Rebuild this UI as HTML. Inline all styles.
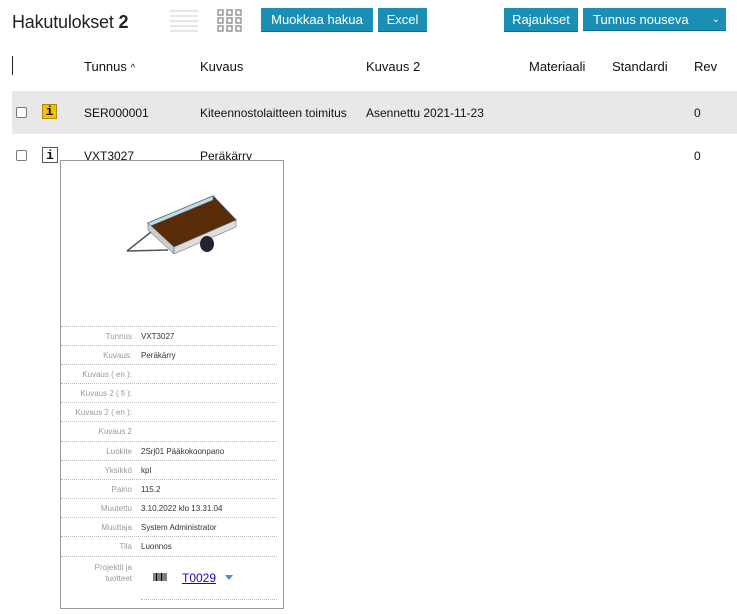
<!DOCTYPE html>
<html><head><meta charset="utf-8"><style>
body{margin:0;width:737px;height:614px;background:#fff;font-family:"Liberation Sans",sans-serif;position:relative;overflow:hidden;color:#111}
.a{position:absolute;white-space:nowrap}
.btn{position:absolute;top:8px;height:23px;background:#1a8fb3;color:#fff;font-size:13px;line-height:23px;text-align:center;border-bottom:1px solid #0d6c88}
.h{font-size:13px;top:59px}
.r{font-size:12px}
.cb{position:absolute;width:9px;height:9px;border:1px solid #777;border-radius:2px;background:#fff}
.pop{position:absolute;left:60px;top:160px;width:222px;height:447px;border:1px solid #999;background:#fff}
.row{position:absolute;left:0;width:216px;height:19px;border-top:1px dotted #bbb;font-size:8px;line-height:19px}
.row .l{position:absolute;right:145px;color:#999;text-align:right}
.row .v{position:absolute;left:80px;color:#333}
</style></head><body>
<div class="a" style="left:12px;top:12px;font-size:18px;color:#222;letter-spacing:-0.2px">Hakutulokset <b>2</b></div>
<svg class="a" style="left:170px;top:9px" width="28" height="24"><g stroke="#ddd" stroke-width="1.5"><line x1="0" y1="2" x2="28" y2="2"/><line x1="0" y1="7" x2="28" y2="7"/><line x1="0" y1="12" x2="28" y2="12"/><line x1="0" y1="17" x2="28" y2="17"/><line x1="0" y1="22" x2="28" y2="22"/></g></svg>
<svg class="a" style="left:217px;top:9px" width="25" height="24"><g fill="none" stroke="#888" stroke-width="1.3"><rect x="1" y="1" width="5" height="5"/><rect x="10" y="1" width="5" height="5"/><rect x="19" y="1" width="5" height="5"/><rect x="1" y="9" width="5" height="5"/><rect x="10" y="9" width="5" height="5"/><rect x="19" y="9" width="5" height="5"/><rect x="1" y="17" width="5" height="5"/><rect x="10" y="17" width="5" height="5"/><rect x="19" y="17" width="5" height="5"/></g></svg>
<div class="btn" style="left:261px;width:112px">Muokkaa hakua</div>
<div class="btn" style="left:378px;width:49px">Excel</div>
<div class="btn" style="left:504px;width:74px">Rajaukset</div>
<div class="btn" style="left:583px;width:143px;text-align:left;padding-left:10px;box-sizing:border-box">Tunnus nouseva<span style="position:absolute;right:6px;font-size:10px">&#8964;</span></div>
<div class="a" style="left:12px;top:56px;width:1px;height:19px;background:#222"></div>
<div class="a h" style="left:84px">Tunnus <span style="font-size:10px">^</span></div>
<div class="a h" style="left:200px">Kuvaus</div>
<div class="a h" style="left:366px">Kuvaus 2</div>
<div class="a h" style="left:529px">Materiaali</div>
<div class="a h" style="left:612px">Standardi</div>
<div class="a h" style="left:694px">Rev</div>
<div class="a" style="left:12px;top:91px;width:725px;height:43px;background:#e8e8e8"></div>
<div class="cb" style="left:16px;top:107px"></div>
<div class="a" style="left:42px;top:104px;width:15px;height:15px;background:#f5c000;border:1px solid #b08a00;box-sizing:border-box;font:bold 13px 'Liberation Mono',monospace;text-align:center;line-height:14px">i</div>
<div class="a r" style="left:84px;top:106px">SER000001</div>
<div class="a r" style="left:200px;top:106px">Kiteennostolaitteen toimitus</div>
<div class="a r" style="left:366px;top:106px">Asennettu 2021-11-23</div>
<div class="a r" style="left:694px;top:106px">0</div>
<div class="cb" style="left:16px;top:150px"></div>
<div class="a" style="left:42px;top:147px;width:16px;height:16px;background:#fff;border:1px solid #555;box-sizing:border-box;font:bold 13px 'Liberation Mono',monospace;text-align:center;line-height:15px">i</div>
<div class="a r" style="left:84px;top:149px">VXT3027</div>
<div class="a r" style="left:200px;top:149px">Peräkärry</div>
<div class="a r" style="left:694px;top:149px">0</div>
<div class="pop">
<svg style="position:absolute;left:62px;top:33px" width="120" height="75" viewBox="0 0 120 75">
<polygon points="25,29 90,2 113,26 51,53" fill="#5a2d0a" stroke="#444"/>
<polygon points="25,29 90,2 90,6 25,33" fill="#bde" stroke="#666" stroke-width=".5"/>
<polygon points="25,29 51,53 51,60 25,36" fill="#ccc" stroke="#555" stroke-width=".5"/>
<polygon points="51,53 113,26 113,33 51,60" fill="#ddd" stroke="#555" stroke-width=".5"/>
<ellipse cx="84" cy="50" rx="7" ry="8" fill="#223"/>
<path d="M28,38 L4,57 M45,56 L4,57" stroke="#555" stroke-width="1.5"/>
</svg>
<div class="row" style="top:165px"><span class="l">Tunnus</span><span class="v">VXT3027</span></div>
<div class="row" style="top:184px"><span class="l">Kuvaus:</span><span class="v">Peräkärry</span></div>
<div class="row" style="top:203px"><span class="l">Kuvaus ( en ):</span></div>
<div class="row" style="top:222px"><span class="l">Kuvaus 2 ( fi ):</span></div>
<div class="row" style="top:241px"><span class="l">Kuvaus 2 ( en ):</span></div>
<div class="row" style="top:260px"><span class="l">Kuvaus 2</span></div>
<div class="row" style="top:280px"><span class="l">Luokite</span><span class="v">2Srj01 Pääkokoonpano</span></div>
<div class="row" style="top:299px"><span class="l">Yksikkö</span><span class="v">kpl</span></div>
<div class="row" style="top:318px"><span class="l">Paino</span><span class="v">115.2</span></div>
<div class="row" style="top:337px"><span class="l">Muutettu</span><span class="v">3.10.2022 klo 13.31.04</span></div>
<div class="row" style="top:356px"><span class="l">Muuttaja</span><span class="v">System Administrator</span></div>
<div class="row" style="top:375px"><span class="l">Tila</span><span class="v">Luonnos</span></div>
<div class="row" style="top:395px;height:40px;line-height:11px"><span class="l" style="top:5px">Projektit ja<br>tuotteet</span></div>
<svg style="position:absolute;left:92px;top:412px" width="14" height="11"><g stroke="#000"><line x1="1" y1="0" x2="1" y2="8"/><line x1="3.5" y1="0" x2="3.5" y2="8" stroke-width="2"/><line x1="6" y1="0" x2="6" y2="8"/><line x1="8.5" y1="0" x2="8.5" y2="8" stroke-width="2"/><line x1="11" y1="0" x2="11" y2="8"/><line x1="13" y1="0" x2="13" y2="8"/></g></svg>
<div style="position:absolute;left:121px;top:410px;font-size:12px;color:#1a0dab;text-decoration:underline">T0029</div>
<div style="position:absolute;left:164px;top:414px;width:0;height:0;border-left:4px solid transparent;border-right:4px solid transparent;border-top:5px solid #4a90d0"></div>
<div style="position:absolute;left:80px;top:438px;width:136px;border-top:1px dotted #bbb"></div>
</div>
</body></html>
